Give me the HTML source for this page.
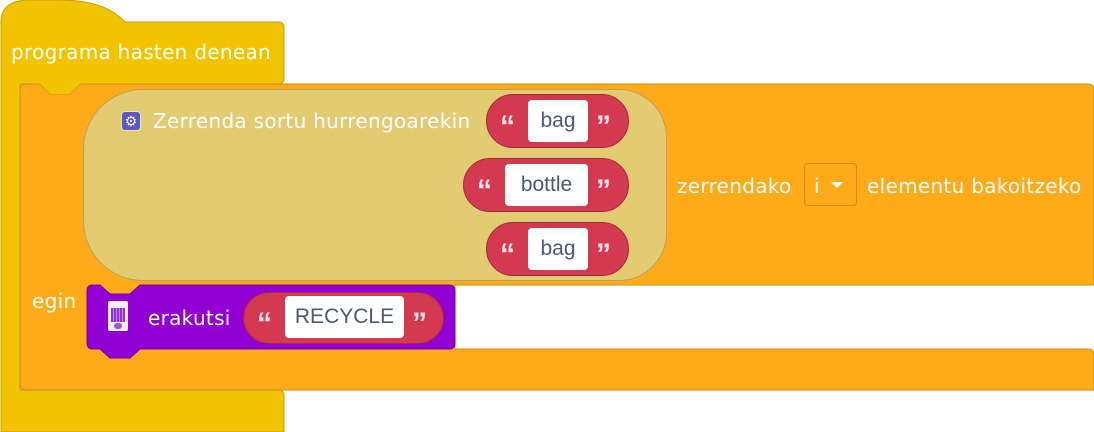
<!DOCTYPE html>
<html><head><meta charset="utf-8"><style>
body{margin:0;width:1094px;height:432px;background:#fff;position:relative;overflow:hidden;font-family:"Liberation Sans",sans-serif;}
.a{position:absolute;box-sizing:border-box;}
.t{position:absolute;color:#fff;font-family:"DejaVu Sans",sans-serif;font-size:20px;letter-spacing:0.3px;white-space:nowrap;line-height:1;}
.pill{position:absolute;box-sizing:border-box;background:#d33a52;border:1px solid #a8283e;border-radius:27px;}
.w{position:absolute;box-sizing:border-box;background:#fff;border-radius:4px;color:#4f5873;font-size:21px;text-align:center;line-height:42px;}
.q{position:absolute;color:#fbe3e6;font-size:30px;font-weight:bold;line-height:1;font-family:"Liberation Sans",sans-serif;}
</style></head><body>
<svg class="a" style="left:0;top:0" width="1094" height="432">
 <path d="M1,22 Q1,0 30,0 L60,0 Q105,0 125,22 L278,22 Q284,22 284,28 L284,78 Q284,84 278,84 L20,84 L20,390 L278,390 Q284,390 284,396 L284,432 L1,432 Z" fill="#f2c400" stroke="#c9a200" stroke-width="1"/>
 <path d="M26,84 L40,84 L50,94 L70,94 L80,84 L1088,84 Q1094,84 1094,90 L1094,285 L455,285 L455,349 L1088,349 Q1094,349 1094,355 L1094,390 L26,390 Q20,390 20,384 L20,90 Q20,84 26,84 Z" fill="#ffab19" stroke="#cf8b17" stroke-width="1"/>
 <path d="M39,83 L50,94 L70,94 L81,83 Z" fill="#f2c400"/>
 <path d="M93,285 L100,285 L110,294 L130,294 L140,285 L449,285 Q455,285 455,291 L455,343 Q455,349 449,349 L140,349 L130,358 L110,358 L100,349 L93,349 Q87,349 87,343 L87,291 Q87,285 93,285 Z" fill="#9300d6" stroke="#7200a8" stroke-width="1"/>
</svg>
<div class="a" style="left:83px;top:89px;width:584px;height:192px;background:#e2cb70;border:1px solid #b5a25a;border-radius:60px 48px 48px 60px;"></div>
<div class="t" style="left:11px;top:42px;">programa hasten denean</div>
<div class="a" style="left:121px;top:111px;width:20px;height:20px;background:#5b57c8;border:1px solid #e8e0c0;border-radius:4px;color:#fff;font-size:14px;text-align:center;line-height:18px;">⚙</div>
<div class="t" style="left:153px;top:111px;">Zerrenda sortu hurrengoarekin</div>
<div class="pill" style="left:486px;top:94px;width:143px;height:54px;"></div>
<div class="w" style="left:528px;top:100px;width:60px;height:42px;">bag</div>
<div class="pill" style="left:463px;top:158px;width:166px;height:54px;"></div>
<div class="w" style="left:505px;top:164px;width:83px;height:42px;">bottle</div>
<div class="pill" style="left:486px;top:222px;width:143px;height:54px;"></div>
<div class="w" style="left:528px;top:228px;width:60px;height:42px;">bag</div>
<div class="q" style="left:500px;top:112px;">“</div><div class="q" style="left:596px;top:112px;">”</div>
<div class="q" style="left:477px;top:176px;">“</div><div class="q" style="left:596px;top:176px;">”</div>
<div class="q" style="left:500px;top:240px;">“</div><div class="q" style="left:596px;top:240px;">”</div>
<div class="t" style="left:677px;top:176px;">zerrendako</div>
<div class="a" style="left:804px;top:163px;width:53px;height:43px;border:1px solid #cf8b17;border-radius:4px;"></div>
<div class="t" style="left:814px;top:176px;">i</div>
<div class="a" style="left:831px;top:182px;width:0;height:0;border-left:6px solid transparent;border-right:6px solid transparent;border-top:6px solid #fff;"></div>
<div class="t" style="left:867px;top:176px;">elementu bakoitzeko</div>
<div class="t" style="left:32px;top:291px;">egin</div>
<div class="a" style="left:108px;top:301px;width:20px;height:30px;background:#f4f0f8;border-radius:2px;"></div>
<div class="a" style="left:111px;top:308px;width:14px;height:14px;background:repeating-linear-gradient(90deg,#9a2fd6 0 2px,#c585e8 2px 3px),#9a2fd6;"></div>
<div class="a" style="left:114px;top:323px;width:8px;height:6px;background:#a455d9;border-radius:3px;"></div>
<div class="t" style="left:148px;top:308px;">erakutsi</div>
<div class="pill" style="left:243px;top:292px;width:201px;height:52px;"></div>
<div class="w" style="left:285px;top:296px;width:119px;height:42px;">RECYCLE</div>
<div class="q" style="left:257px;top:309px;">“</div><div class="q" style="left:412px;top:309px;">”</div>
</body></html>
